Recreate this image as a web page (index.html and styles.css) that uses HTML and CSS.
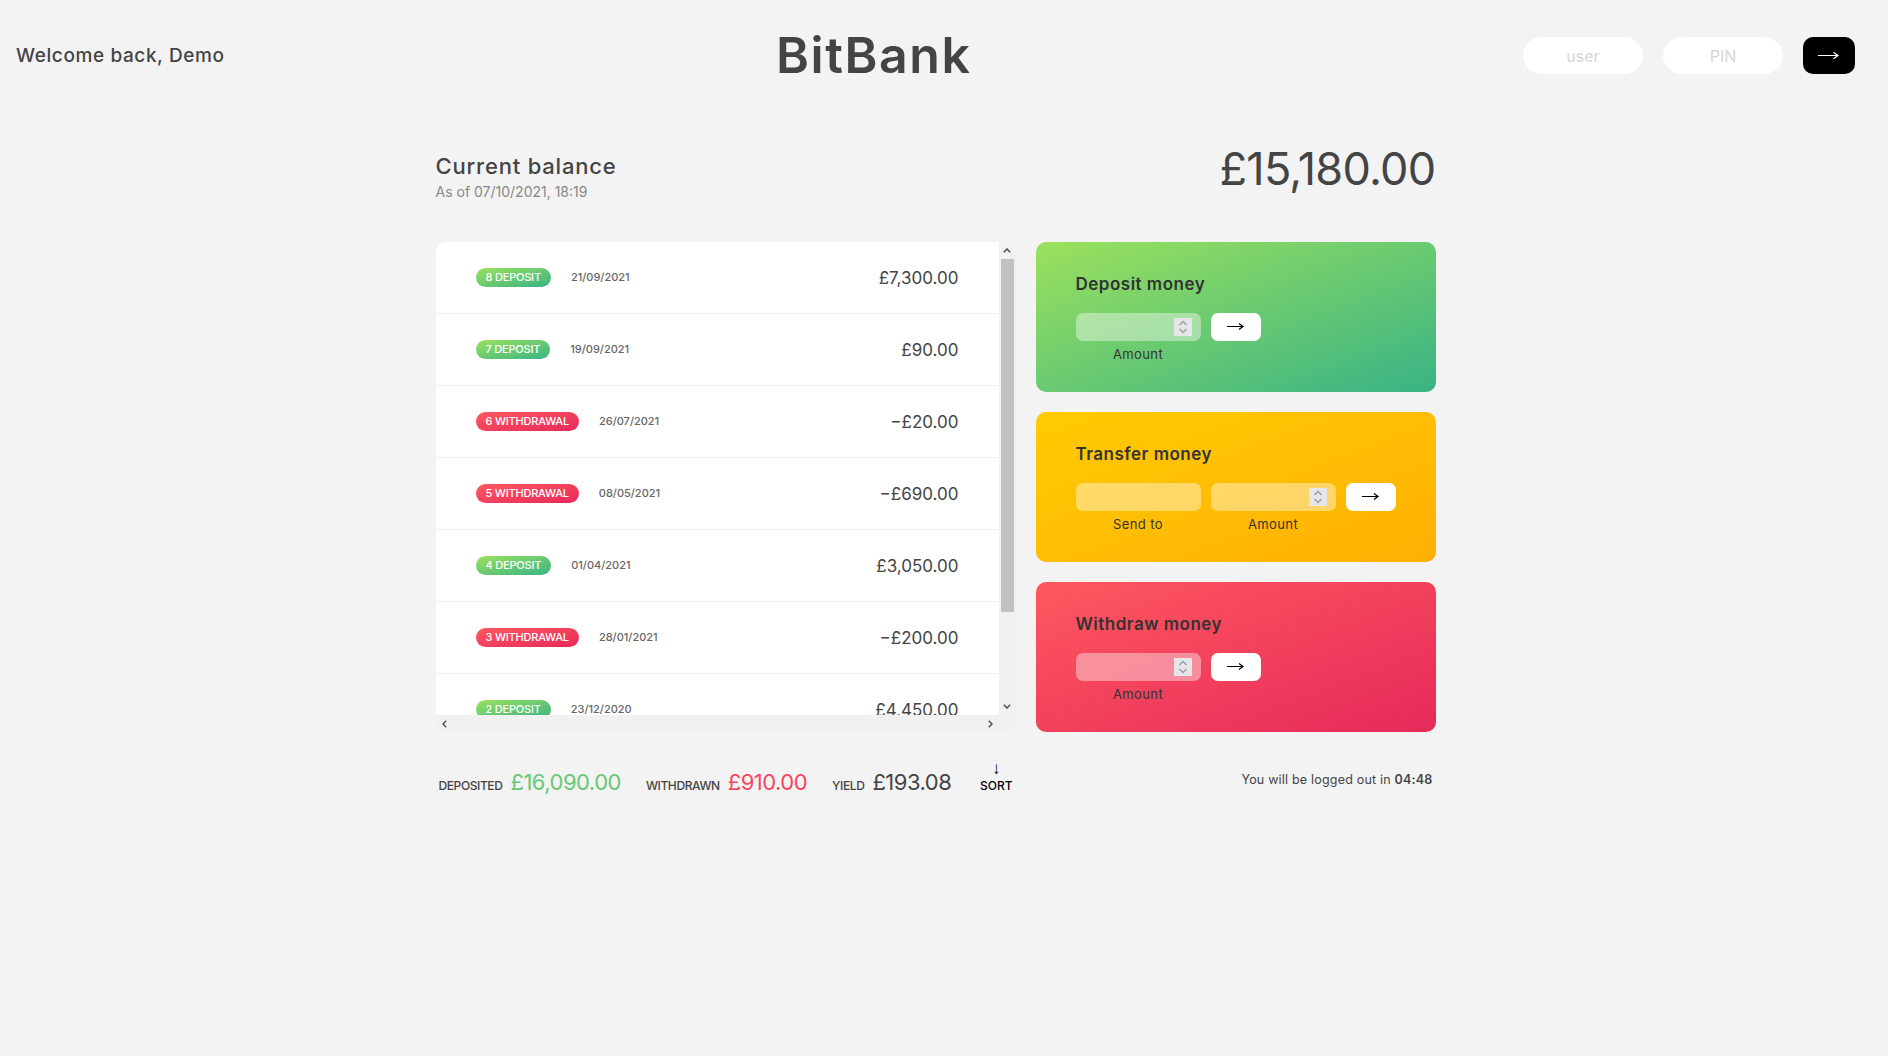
FILE: index.html
```html
<!DOCTYPE html>
<html lang="en">
<head>
<meta charset="UTF-8">
<title>BitBank</title>
<link rel="stylesheet" href="styles.css">
</head>
<body>
<nav class="nav">
  <p class="welcome">Welcome back, Demo</p>
  <div class="logo">BitBank</div>
  <form class="login">
    <input type="text" placeholder="user" class="login__input">
    <input type="text" placeholder="PIN" maxlength="4" class="login__input">
    <button type="button" class="login__btn" aria-label="Log in"><svg width="21" height="9" viewBox="0 0 21 9"><path d="M0 4.5H20M15.5 1.2L20 4.5L15.5 7.8" fill="none" stroke="#fff" stroke-width="1.2"/></svg></button>
  </form>
</nav>

<main class="app">
  <div class="balance">
    <div>
      <p class="balance__label">Current balance</p>
      <p class="balance__date">As of <span>07/10/2021, 18:19</span></p>
    </div>
    <p class="balance__value">£15,180.00</p>
  </div>

  <div class="movements">
    <div class="movements__list">
      <div class="movements__row">
        <div class="movements__type movements__type--deposit">8 deposit</div>
        <div class="movements__date">21/09/2021</div>
        <div class="movements__value">£7,300.00</div>
      </div>
      <div class="movements__row">
        <div class="movements__type movements__type--deposit">7 deposit</div>
        <div class="movements__date">19/09/2021</div>
        <div class="movements__value">£90.00</div>
      </div>
      <div class="movements__row">
        <div class="movements__type movements__type--withdrawal">6 withdrawal</div>
        <div class="movements__date">26/07/2021</div>
        <div class="movements__value">−£20.00</div>
      </div>
      <div class="movements__row">
        <div class="movements__type movements__type--withdrawal">5 withdrawal</div>
        <div class="movements__date">08/05/2021</div>
        <div class="movements__value">−£690.00</div>
      </div>
      <div class="movements__row">
        <div class="movements__type movements__type--deposit">4 deposit</div>
        <div class="movements__date">01/04/2021</div>
        <div class="movements__value">£3,050.00</div>
      </div>
      <div class="movements__row">
        <div class="movements__type movements__type--withdrawal">3 withdrawal</div>
        <div class="movements__date">28/01/2021</div>
        <div class="movements__value">−£200.00</div>
      </div>
      <div class="movements__row">
        <div class="movements__type movements__type--deposit">2 deposit</div>
        <div class="movements__date">23/12/2020</div>
        <div class="movements__value">£4,450.00</div>
      </div>
      <div class="movements__row">
        <div class="movements__type movements__type--deposit">1 deposit</div>
        <div class="movements__date">18/11/2020</div>
        <div class="movements__value">£1,200.00</div>
      </div>
    </div>
    <div class="scrollbar scrollbar--v">
      <span class="scrollbar__btn"><svg width="8" height="5" viewBox="0 0 8 5"><polyline points="0.8,4.2 4,1 7.2,4.2" fill="none" stroke="#505050" stroke-width="1.5"/></svg></span>
      <span class="scrollbar__thumb"></span>
      <span class="scrollbar__btn scrollbar__btn--end"><svg width="8" height="5" viewBox="0 0 8 5"><polyline points="0.8,0.8 4,4 7.2,0.8" fill="none" stroke="#505050" stroke-width="1.5"/></svg></span>
    </div>
    <div class="scrollbar scrollbar--h">
      <span class="scrollbar__btn"><svg width="5" height="8" viewBox="0 0 5 8"><polyline points="4.2,0.8 1,4 4.2,7.2" fill="none" stroke="#505050" stroke-width="1.5"/></svg></span>
      <span class="scrollbar__btn scrollbar__btn--end"><svg width="5" height="8" viewBox="0 0 5 8"><polyline points="0.8,0.8 4,4 0.8,7.2" fill="none" stroke="#505050" stroke-width="1.5"/></svg></span>
    </div>
  </div>

  <div class="summary">
    <p class="summary__label">Deposited</p>
    <p class="summary__value summary__value--in">£16,090.00</p>
    <p class="summary__label">Withdrawn</p>
    <p class="summary__value summary__value--out">£910.00</p>
    <p class="summary__label">Yield</p>
    <p class="summary__value summary__value--interest">£193.08</p>
    <button type="button" class="btn--sort"><span class="btn--sort__arrow">↓</span>SORT</button>
  </div>

  <div class="operation operation--deposit">
    <h2>Deposit money</h2>
    <form class="form form--single">
      <div class="form__field">
        <input type="text" inputmode="numeric" class="form__input">
        <span class="spin"><svg width="10" height="14" viewBox="0 0 10 14"><polyline points="1.5,5 5,1.5 8.5,5" fill="none" stroke="#9a9a9a" stroke-width="1.3"/><polyline points="1.5,9 5,12.5 8.5,9" fill="none" stroke="#9a9a9a" stroke-width="1.3"/></svg></span>
      </div>
      <button type="button" class="form__btn" aria-label="Deposit"><svg width="17" height="9" viewBox="0 0 17 9"><path d="M0 4.5H16M12 1.5L16 4.5L12 7.5" fill="none" stroke="#000" stroke-width="1.2"/></svg></button>
      <label class="form__label form__label--single">Amount</label>
    </form>
  </div>

  <div class="operation operation--transfer">
    <h2>Transfer money</h2>
    <form class="form form--transfer">
      <div class="form__field">
        <input type="text" class="form__input">
      </div>
      <div class="form__field">
        <input type="text" inputmode="numeric" class="form__input">
        <span class="spin"><svg width="10" height="14" viewBox="0 0 10 14"><polyline points="1.5,5 5,1.5 8.5,5" fill="none" stroke="#9a9a9a" stroke-width="1.3"/><polyline points="1.5,9 5,12.5 8.5,9" fill="none" stroke="#9a9a9a" stroke-width="1.3"/></svg></span>
      </div>
      <button type="button" class="form__btn" aria-label="Transfer"><svg width="17" height="9" viewBox="0 0 17 9"><path d="M0 4.5H16M12 1.5L16 4.5L12 7.5" fill="none" stroke="#000" stroke-width="1.2"/></svg></button>
      <label class="form__label">Send to</label>
      <label class="form__label">Amount</label>
    </form>
  </div>

  <div class="operation operation--withdraw">
    <h2>Withdraw money</h2>
    <form class="form form--single">
      <div class="form__field">
        <input type="text" inputmode="numeric" class="form__input">
        <span class="spin"><svg width="10" height="14" viewBox="0 0 10 14"><polyline points="1.5,5 5,1.5 8.5,5" fill="none" stroke="#9a9a9a" stroke-width="1.3"/><polyline points="1.5,9 5,12.5 8.5,9" fill="none" stroke="#9a9a9a" stroke-width="1.3"/></svg></span>
      </div>
      <button type="button" class="form__btn" aria-label="Withdraw"><svg width="17" height="9" viewBox="0 0 17 9"><path d="M0 4.5H16M12 1.5L16 4.5L12 7.5" fill="none" stroke="#000" stroke-width="1.2"/></svg></button>
      <label class="form__label form__label--single">Amount</label>
    </form>
  </div>

  <p class="logout-timer">You will be logged out in <span class="timer">04:48</span></p>
</main>
</body>
</html>
```

FILE: styles.css
```css
* {
  margin: 0;
  padding: 0;
  box-sizing: border-box;
}

body {
  padding: 18px 33px 0 16px;
  background-color: #f3f3f3;
  color: #444;
  font-family: Inter, "Noto Sans", sans-serif;
  line-height: 1.5;
  height: 100vh;
  overflow: hidden;
}

/* NAV */
.nav {
  display: flex;
  justify-content: space-between;
  align-items: center;
  height: 75px;
}

.welcome {
  font-size: 19px;
  font-weight: 500;
  letter-spacing: 0.6px;
  margin-top: 2px;
}

.logo {
  font-size: 50px;
  font-weight: 600;
  color: #444;
  letter-spacing: 1.6px;
  line-height: 75px;
}

.login {
  display: flex;
  gap: 20px;
}

.login__input {
  width: 120px;
  height: 37px;
  border: 1px solid #fff;
  border-radius: 100px;
  background: #fff;
  padding: 5px 20px;
  font-family: inherit;
  font-size: 16px;
  text-align: center;
  color: inherit;
}

.login__input::placeholder {
  color: #d6d6d6;
}

.login__btn {
  width: 52px;
  height: 37px;
  border: none;
  border-radius: 10px;
  background: #000;
  display: flex;
  align-items: center;
  justify-content: center;
}

/* APP */
.app {
  max-width: 1000px;
  margin: 42px auto 0;
  display: grid;
  grid-template-columns: 580px minmax(0, 1fr);
  grid-template-rows: auto repeat(3, 150px) auto;
  gap: 20px;
}

.balance {
  grid-column: 1 / span 2;
  display: flex;
  align-items: flex-end;
  justify-content: space-between;
  margin-bottom: 20px;
}

.balance__label {
  font-size: 22px;
  font-weight: 500;
  line-height: 33px;
  margin-bottom: -2px;
  letter-spacing: 0.8px;
}

.balance__date {
  font-size: 14px;
  color: #888;
  line-height: 21px;
}

.balance__value {
  font-size: 45px;
  font-weight: 400;
  line-height: 67px;
  letter-spacing: -0.7px;
}

/* MOVEMENTS */
.movements {
  grid-column: 1;
  grid-row: 2 / span 3;
  background-color: #fff;
  border-radius: 10px;
  overflow: hidden;
  display: grid;
  grid-template-columns: minmax(0, 1fr) 17px;
  grid-template-rows: minmax(0, 1fr) 17px;
}

.movements__list {
  overflow: hidden;
  min-height: 0;
}

.movements__row {
  padding: 22.5px 40px;
  display: flex;
  align-items: center;
  border-bottom: 1px solid #eee;
}

.movements__type {
  font-size: 11px;
  text-transform: uppercase;
  font-weight: 500;
  color: #fff;
  padding: 1px 10px;
  line-height: 16.5px;
  border-radius: 100px;
  margin-right: 20px;
  letter-spacing: -0.2px;
}

.movements__type--deposit {
  background-image: linear-gradient(to top left, #39b385, #9be15d);
}

.movements__type--withdrawal {
  background-image: linear-gradient(to top left, #e52a5a, #ff585f);
}

.movements__date {
  font-size: 11px;
  font-weight: 500;
  color: #666;
}

.movements__value {
  font-size: 17px;
  line-height: 26px;
  margin-left: auto;
}

/* FAKE SCROLLBARS */
.scrollbar {
  display: flex;
  background-color: #f1f1f1;
}

.scrollbar--v {
  flex-direction: column;
}

.scrollbar--h {
  grid-column: 1 / span 2;
  padding-right: 17px;
}

.scrollbar__btn {
  flex: 0 0 17px;
  width: 17px;
  height: 17px;
  display: flex;
  align-items: center;
  justify-content: center;
}

.scrollbar__btn--end {
  margin-top: auto;
  margin-left: auto;
}

.scrollbar--v .scrollbar__btn--end {
  margin-left: 0;
}

.scrollbar--h .scrollbar__btn--end {
  margin-top: 0;
}

.scrollbar__thumb {
  flex: 0 0 353px;
  margin: 0 2px;
  background-color: #c1c1c1;
}

/* SUMMARY */
.summary {
  grid-column: 1;
  grid-row: 5;
  display: flex;
  align-items: baseline;
  padding: 0 3px;
  margin-top: 14px;
}

.summary__label {
  font-size: 12px;
  font-weight: 500;
  text-transform: uppercase;
  margin-right: 8px;
  letter-spacing: -0.4px;
  flex-shrink: 0;
}

.summary__value {
  font-size: 22px;
  line-height: 33px;
  margin-right: 25px;
  letter-spacing: -0.5px;
  flex-shrink: 0;
}

.summary__value--in {
  color: #66c873;
}

.summary__value--out {
  color: #f5465d;
}

.summary__value--interest {
  color: #444;
}

.btn--sort {
  margin-left: auto;
  align-self: flex-start;
  margin-top: -6px;
  padding: 0;
  border: none;
  background: none;
  font-family: inherit;
  font-size: 12px;
  font-weight: 500;
  color: #000;
  line-height: 16px;
  display: flex;
  flex-direction: column;
  align-items: center;
}

.btn--sort__arrow {
  font-family: "Liberation Sans", sans-serif;
  font-weight: 400;
  font-size: 17px;
  line-height: 18px;
}

/* OPERATIONS */
.operation {
  grid-column: 2;
  border-radius: 10px;
  padding: 30px 40px;
  color: #333;
}

.operation--deposit {
  background-image: linear-gradient(to top left, #39b385, #9be15d);
}

.operation--transfer {
  background-image: linear-gradient(to top left, #ffb003, #ffcb03);
}

.operation--withdraw {
  background-image: linear-gradient(to top left, #e52a5a, #ff585f);
}

h2 {
  margin-bottom: 15px;
  font-size: 17px;
  line-height: 25.5px;
  font-weight: 600;
  color: #333;
  letter-spacing: 0.5px;
}

.form {
  display: grid;
  grid-template-columns: minmax(0, 2.5fr) minmax(0, 2.5fr) minmax(0, 1fr);
  gap: 4px 10px;
}

.form--single {
  grid-template-columns: minmax(0, 2.5fr) minmax(0, 1fr) minmax(0, 2.5fr);
}

.form__label--single {
  grid-row: 2;
  grid-column: 1;
}

.form__field {
  display: flex;
  align-items: center;
  min-width: 0;
  height: 28px;
  padding-right: 9px;
  border-radius: 7px;
  background-color: rgba(255, 255, 255, 0.4);
}

.form__input {
  flex: 1 1 0;
  width: 0;
  min-width: 0;
  height: 100%;
  border: none;
  background: transparent;
  font-family: inherit;
  font-size: 15px;
  text-align: center;
  color: #333;
  padding: 3px 10px;
}

.form__input:focus {
  outline: none;
}

.spin {
  flex: 0 0 18px;
  height: 18px;
  display: flex;
  align-items: center;
  justify-content: center;
  background-color: #e6e6ea;
}

.form__label {
  font-size: 13px;
  text-align: center;
  letter-spacing: 0.4px;
}

.form__btn {
  border: none;
  border-radius: 7px;
  background-color: #fff;
  display: flex;
  align-items: center;
  justify-content: center;
}

.logout-timer {
  grid-column: 2;
  grid-row: 5;
  align-self: center;
  padding: 0 3px;
  text-align: right;
  font-size: 12.5px;
  letter-spacing: 0.2px;
  margin-top: 10px;
}

.timer {
  font-weight: 600;
}
```
